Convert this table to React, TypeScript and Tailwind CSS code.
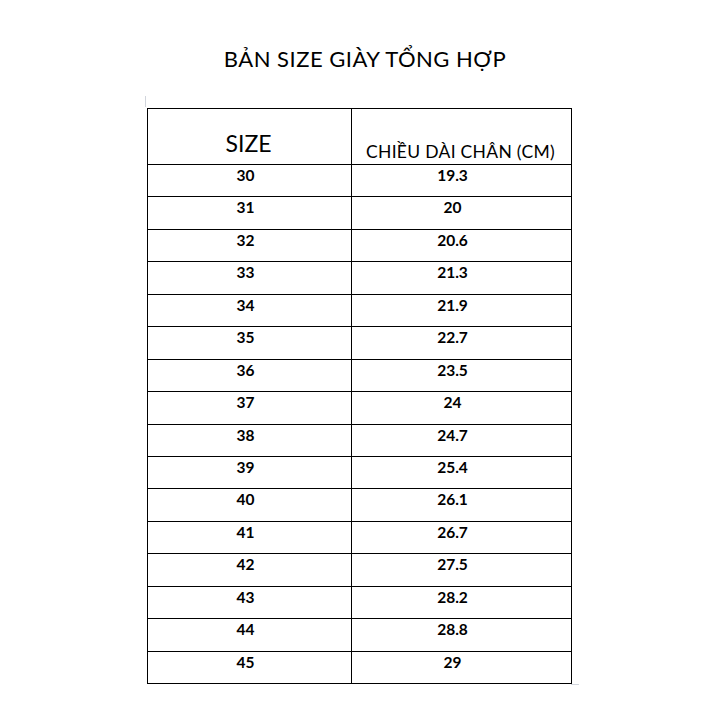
import React from "react";

const rows: [string, string][] = [
  ["30", "19.3"],
  ["31", "20"],
  ["32", "20.6"],
  ["33", "21.3"],
  ["34", "21.9"],
  ["35", "22.7"],
  ["36", "23.5"],
  ["37", "24"],
  ["38", "24.7"],
  ["39", "25.4"],
  ["40", "26.1"],
  ["41", "26.7"],
  ["42", "27.5"],
  ["43", "28.2"],
  ["44", "28.8"],
  ["45", "29"],
];

export default function App() {
  return (
    <div
      className="w-[720px] h-[720px] bg-white text-black flex flex-col items-center"
      style={{ fontFamily: "Lato, 'Open Sans', sans-serif" }}
    >
      <h1 className="mt-[44px] pl-[10px] h-[30px] text-[22px] leading-[30px] font-normal tracking-[0.5px]">
        BẢN SIZE GIÀY TỔNG HỢP
      </h1>
      <div className="mt-[22px] w-[426px] relative">
        <div className="w-px h-[11px] bg-gray-300 ml-[-2px]" />
        <table className="border-collapse mt-[1px] ml-[0px]">
          <tbody>
            <tr className="h-[56px]">
              <td className="w-[204px] border border-black align-bottom pb-[7px] text-center pr-[2px] text-[23px] leading-[28px]">
                SIZE
              </td>
              <td className="w-[220px] border border-black align-bottom pb-[1px] text-center pr-[2px] text-[17.5px] leading-[22px] tracking-[0.3px]">
                CHIỀU DÀI CHÂN (CM)
              </td>
            </tr>
            {rows.map(([s, c]) => (
              <tr key={s} className="h-[32.44px]">
                <td className="border border-black align-top pt-[1px] text-center pr-[8px] text-[15.5px] leading-[19px] font-bold">
                  {s}
                </td>
                <td className="border border-black align-top pt-[1px] text-center pr-[18px] text-[15.5px] leading-[19px] font-bold">
                  {c}
                </td>
              </tr>
            ))}
          </tbody>
        </table>
        <div className="w-[8px] h-px bg-gray-300 ml-[424px]" />
      </div>
    </div>
  );
}
